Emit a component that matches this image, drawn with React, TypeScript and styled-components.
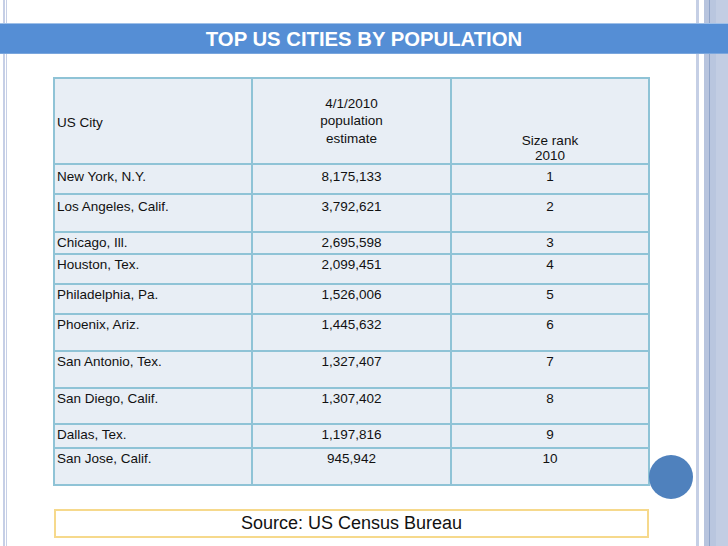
import React from "react";
import styled, { createGlobalStyle } from "styled-components";

const Global = createGlobalStyle`
  html, body { margin: 0; padding: 0; background: #ffffff; }
  body { font-family: "Liberation Sans", Arial, sans-serif; color: #111; }
`;

const Slide = styled.div`
  position: relative;
  width: 728px;
  height: 546px;
  overflow: hidden;
  display: flex;
  flex-direction: column;
  background: linear-gradient(
    to right,
    #ffffff 0px, #ffffff 3px,
    #c6cfe6 3px, #c6cfe6 5px,
    #ffffff 5px, #ffffff 6px,
    #c6cfe6 6px, #c6cfe6 7.5px,
    #ffffff 7.5px, #ffffff 696px,
    #c5cfe5 696px, #c5cfe5 699px,
    #ffffff 699px, #ffffff 704px,
    #b7c4de 704px, #b7c4de 709px,
    #8fa4c9 709px, #8fa4c9 710px,
    #b9c6df 710px, #b9c6df 716px,
    #c2cde3 716px, #c2cde3 728px
  );
`;

const TitleBar = styled.div`
  margin-top: 23px;
  height: 31px;
  box-sizing: border-box;
  padding-top: 1px;
  border-top: 1px solid #9fc0e8;
  border-bottom: 1px solid #7aa6dd;
  background: #558ed5;
  color: #ffffff;
  font-weight: bold;
  font-size: 20.3px;
  display: flex;
  align-items: center;
  justify-content: center;
`;

const Grid = styled.div`
  margin: 23px 0 0 53px;
  width: 593px;
  padding: 2px;
  background: #8fc3d6;
  display: flex;
  flex-direction: column;
  gap: 2px;
`;

const Row = styled.div<{ $h: number }>`
  display: grid;
  grid-template-columns: 196px 197px 196px;
  gap: 2px;
  height: ${(p) => p.$h}px;
`;

const Cell = styled.div<{ $align?: "left" | "center"; $pad?: number }>`
  background: #e8eef5;
  font-size: 13.5px;
  line-height: 16px;
  padding: ${(p) => p.$pad ?? 2}px 2px 0 2px;
  text-align: ${(p) => p.$align ?? "left"};
  white-space: nowrap;
`;

const HeadCell = styled.div<{ $valign: "center" | "end"; $lh: number; $pt?: number }>`
  background: #e8eef5;
  font-size: 13.5px;
  line-height: ${(p) => p.$lh}px;
  display: flex;
  flex-direction: column;
  justify-content: ${(p) => p.$valign};
  padding: ${(p) => p.$pt ?? 0}px 2px 0 2px;
`;

const HeadLine = styled.span<{ $align?: "left" | "center" }>`
  display: block;
  text-align: ${(p) => p.$align ?? "center"};
`;

const SourceBox = styled.div`
  margin: 23px 0 0 54px;
  width: 591px;
  height: 25px;
  border: 2px solid #f6d98c;
  background: #ffffff;
  font-size: 18px;
  display: flex;
  align-items: center;
  justify-content: center;
`;

const Dot = styled.div`
  position: absolute;
  left: 649px;
  top: 455px;
  width: 44px;
  height: 44px;
  border-radius: 50%;
  background: #4f81bd;
`;

const rows: { city: string; pop: string; rank: string; h: number; pad?: number }[] = [
  { city: "New York, N.Y.", pop: "8,175,133", rank: "1", h: 28, pad: 4 },
  { city: "Los Angeles, Calif.", pop: "3,792,621", rank: "2", h: 36, pad: 4 },
  { city: "Chicago, Ill.", pop: "2,695,598", rank: "3", h: 20 },
  { city: "Houston, Tex.", pop: "2,099,451", rank: "4", h: 28 },
  { city: "Philadelphia, Pa.", pop: "1,526,006", rank: "5", h: 28 },
  { city: "Phoenix, Ariz.", pop: "1,445,632", rank: "6", h: 35 },
  { city: "San Antonio, Tex.", pop: "1,327,407", rank: "7", h: 35 },
  { city: "San Diego, Calif.", pop: "1,307,402", rank: "8", h: 34 },
  { city: "Dallas, Tex.", pop: "1,197,816", rank: "9", h: 22 },
  { city: "San Jose, Calif.", pop: "945,942", rank: "10", h: 35 },
];

export default function App() {
  return (
    <>
      <Global />
      <Slide>
        <TitleBar>TOP US CITIES BY POPULATION</TitleBar>
        <Grid>
          <Row $h={84}>
            <HeadCell $valign="center" $lh={16} $pt={4}>
              <HeadLine $align="left">US City</HeadLine>
            </HeadCell>
            <HeadCell $valign="center" $lh={17.5}>
              <HeadLine>4/1/2010</HeadLine>
              <HeadLine>population</HeadLine>
              <HeadLine>estimate</HeadLine>
            </HeadCell>
            <HeadCell $valign="end" $lh={14.5}>
              <HeadLine>Size rank</HeadLine>
              <HeadLine>2010</HeadLine>
            </HeadCell>
          </Row>
          {rows.map((r) => (
            <Row key={r.city} $h={r.h}>
              <Cell $pad={r.pad}>{r.city}</Cell>
              <Cell $align="center" $pad={r.pad}>{r.pop}</Cell>
              <Cell $align="center" $pad={r.pad}>{r.rank}</Cell>
            </Row>
          ))}
        </Grid>
        <SourceBox>Source: US Census Bureau</SourceBox>
        <Dot />
      </Slide>
    </>
  );
}
